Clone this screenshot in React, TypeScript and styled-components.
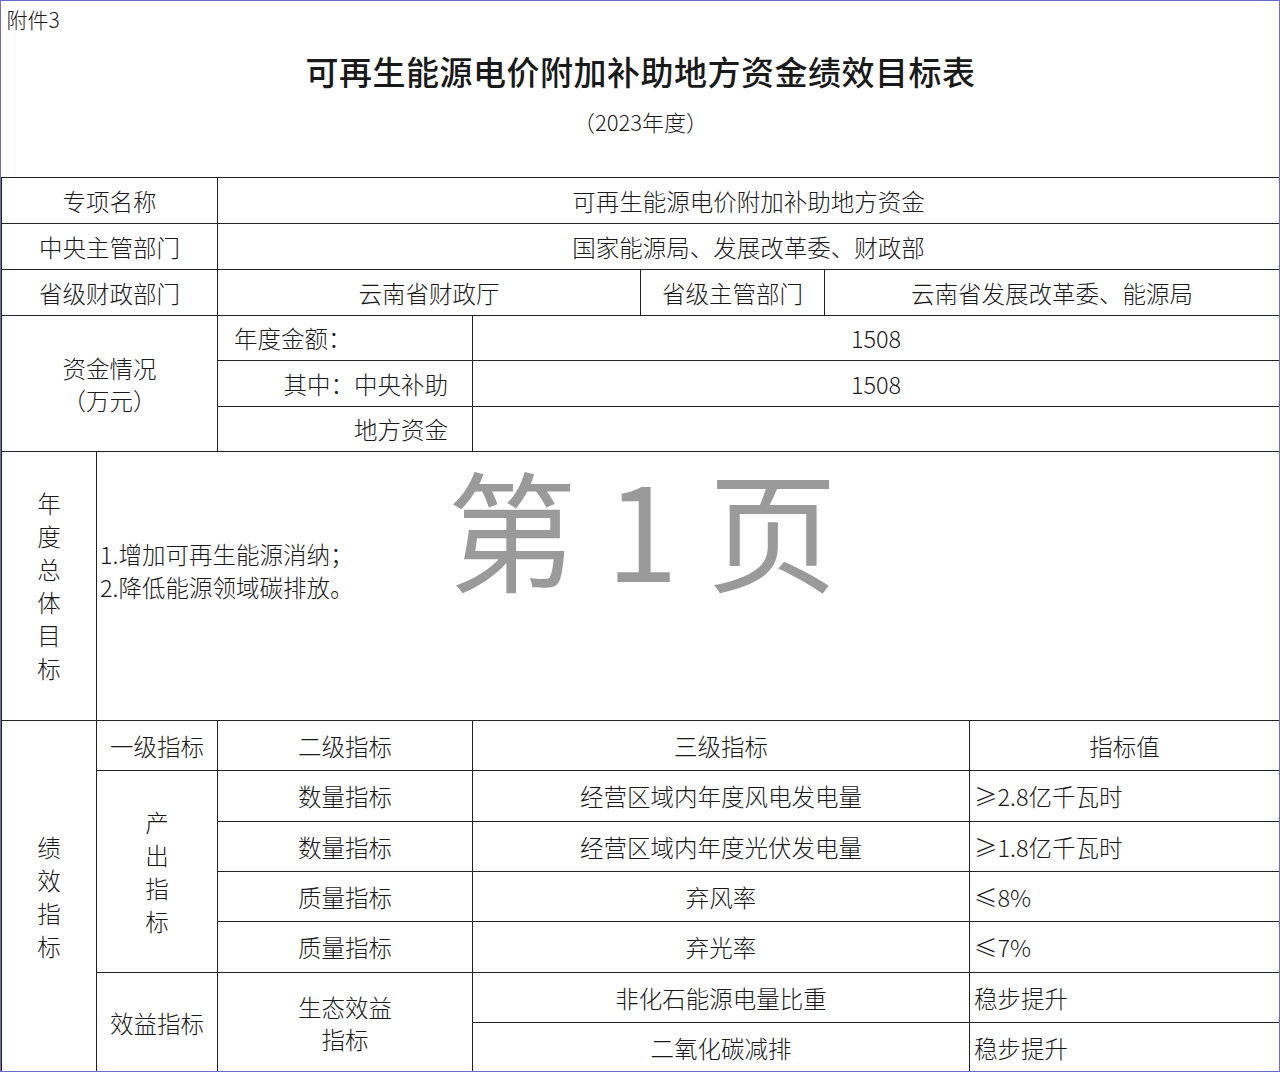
import React from "react";
import styled, { createGlobalStyle } from "styled-components";

const G = createGlobalStyle`
  html, body { margin: 0; padding: 0; background: #fff; }
  body { font-family: "Noto Sans CJK SC", "DejaVu Sans", sans-serif; color: #1a1a1a; }
`;

const Frame = styled.div`
  position: relative;
  width: 1280px;
  height: 1072px;
  box-sizing: border-box;
  border: 1px solid #6d6dd0;
  overflow: hidden;
`;

const Table = styled.table`
  border-collapse: collapse;
  table-layout: fixed;
  width: 1278px;
  height: 1070px;
  font-size: 23.5px;
`;

const Td = styled.td<{ $align?: string; $h?: number; $pad?: number }>`
  border: 1px solid #222;
  text-align: ${(p) => p.$align || "center"};
  vertical-align: middle;
  height: ${(p) => (p.$h ? p.$h + "px" : "auto")};
  padding: 0 ${(p) => p.$pad ?? 4}px;
  line-height: 32px;
  font-weight: 300;
  box-sizing: border-box;
  white-space: nowrap;
`;

const HeaderCell = styled.td`
  border-bottom: 1px solid #222;
  height: 176px;
  vertical-align: top;
  padding: 0;
`;

const Header = styled.div`
  display: flex;
  flex-direction: column;
  height: 176px;
`;

const Attach = styled.div`
  font-size: 21px;
  padding: 4px 5px 0;
  line-height: 28px;
  font-weight: 300;
`;

const Title = styled.div`
  text-align: center;
  font-size: 33px;
  font-weight: 500;
  margin-top: 14px;
  letter-spacing: 0.5px;
`;

const Sub = styled.div`
  text-align: center;
  font-size: 22px;
  margin-top: 10px;
  font-weight: 300;
`;

const Vertical = styled.div`
  width: 1em;
  margin: 0 auto;
  line-height: 33px;
  white-space: normal;
  word-break: break-all;
`;

const Watermark = styled.div`
  position: absolute;
  left: 446px;
  top: 430px;
  font-size: 130px;
  color: #9a9a9a;
  font-weight: 400;
  white-space: pre;
  pointer-events: none;
  font-family: "Noto Sans CJK SC", sans-serif;
`;

const Goals = styled.div`
  line-height: 33px;
  margin-top: -30px;
`;

export default function App() {
  return (
    <>
      <G />
      <Frame>
        <Table>
          <colgroup>
            <col style={{ width: 95 }} />
            <col style={{ width: 121 }} />
            <col style={{ width: 255 }} />
            <col style={{ width: 168 }} />
            <col style={{ width: 184 }} />
            <col style={{ width: 145 }} />
            <col style={{ width: 310 }} />
          </colgroup>
          <tbody>
            <tr>
              <HeaderCell colSpan={7}>
                <Header>
                  <Attach>附件3</Attach>
                  <Title>可再生能源电价附加补助地方资金绩效目标表</Title>
                  <Sub>（2023年度）</Sub>
                </Header>
              </HeaderCell>
            </tr>
            <tr>
              <Td colSpan={2} $h={46}>专项名称</Td>
              <Td colSpan={5}>可再生能源电价附加补助地方资金</Td>
            </tr>
            <tr>
              <Td colSpan={2} $h={46}>中央主管部门</Td>
              <Td colSpan={5}>国家能源局、发展改革委、财政部</Td>
            </tr>
            <tr>
              <Td colSpan={2} $h={46}>省级财政部门</Td>
              <Td colSpan={2}>云南省财政厅</Td>
              <Td>省级主管部门</Td>
              <Td colSpan={2}>云南省发展改革委、能源局</Td>
            </tr>
            <tr>
              <Td colSpan={2} rowSpan={3}>资金情况<br />（万元）</Td>
              <Td $h={45} $align="left" $pad={16}>年度金额：</Td>
              <Td colSpan={4}>1508</Td>
            </tr>
            <tr>
              <Td $h={46} $align="right" $pad={24}>其中：中央补助</Td>
              <Td colSpan={4}>1508</Td>
            </tr>
            <tr>
              <Td $h={45} $align="right" $pad={24}>地方资金</Td>
              <Td colSpan={4}></Td>
            </tr>
            <tr>
              <Td $h={269}><Vertical>年度总体目标</Vertical></Td>
              <Td colSpan={6} $align="left" $pad={3}>
                <Goals>1.增加可再生能源消纳；<br />2.降低能源领域碳排放。</Goals>
              </Td>
            </tr>
            <tr>
              <Td rowSpan={7}><Vertical>绩效指标</Vertical></Td>
              <Td $h={50}>一级指标</Td>
              <Td>二级指标</Td>
              <Td colSpan={3}>三级指标</Td>
              <Td>指标值</Td>
            </tr>
            <tr>
              <Td rowSpan={4}><Vertical>产出指标</Vertical></Td>
              <Td $h={51}>数量指标</Td>
              <Td colSpan={3}>经营区域内年度风电发电量</Td>
              <Td $align="left">≥2.8亿千瓦时</Td>
            </tr>
            <tr>
              <Td $h={50}>数量指标</Td>
              <Td colSpan={3}>经营区域内年度光伏发电量</Td>
              <Td $align="left">≥1.8亿千瓦时</Td>
            </tr>
            <tr>
              <Td $h={50}>质量指标</Td>
              <Td colSpan={3}>弃风率</Td>
              <Td $align="left">≤8%</Td>
            </tr>
            <tr>
              <Td $h={51}>质量指标</Td>
              <Td colSpan={3}>弃光率</Td>
              <Td $align="left">≤7%</Td>
            </tr>
            <tr>
              <Td rowSpan={2}>效益指标</Td>
              <Td rowSpan={2}>生态效益<br />指标</Td>
              <Td colSpan={3} $h={50}>非化石能源电量比重</Td>
              <Td $align="left">稳步提升</Td>
            </tr>
            <tr>
              <Td colSpan={3} $h={50}>二氧化碳减排</Td>
              <Td $align="left">稳步提升</Td>
            </tr>
          </tbody>
        </Table>
        <Watermark>第 1 页</Watermark>
      </Frame>
    </>
  );
}
